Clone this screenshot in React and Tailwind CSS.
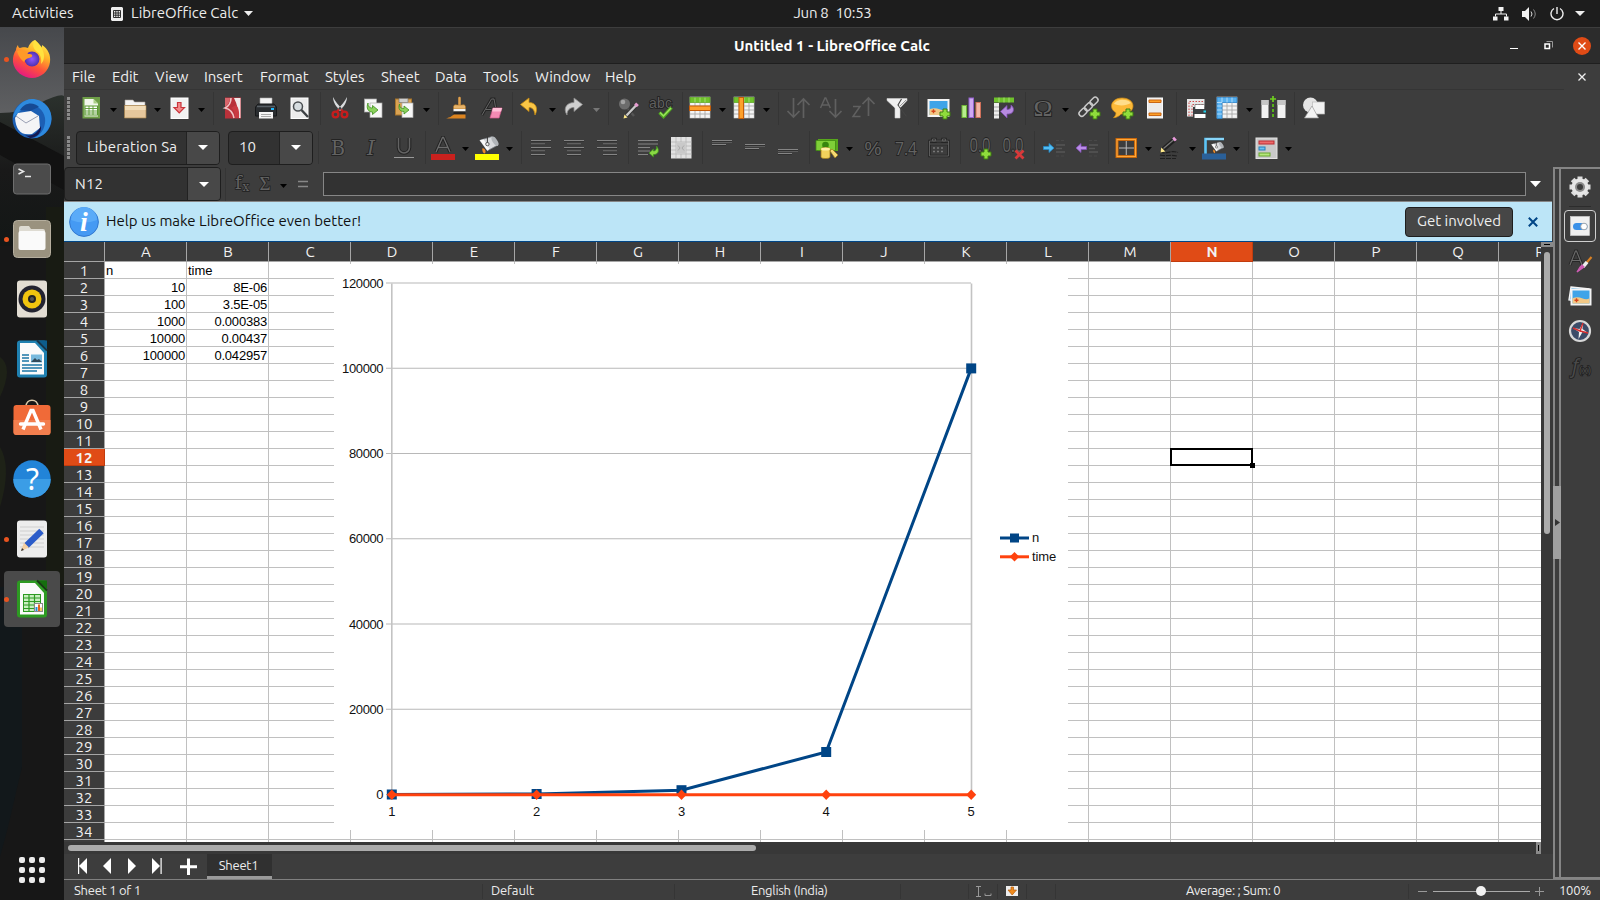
import React from 'react';

const Ic = ({ s = 24, children, className = '' }) => (
  <svg width={s} height={s} viewBox="0 0 24 24" fill="none" className={'shrink-0 overflow-visible ' + className}>{children}</svg>
);

const Caret = ({ className = 'text-black' }) => (
  <svg width="7" height="4" viewBox="0 0 7 4" className={'shrink-0 ' + className}><path d="M0 0h7L3.5 4z" fill="currentColor" /></svg>
);

const Btn = ({ children }) => <div className="flex h-6 w-[33px] shrink-0 items-center justify-center pr-[2px]">{children}</div>;
const Drop = ({ children, dim }) => (
  <div className="flex h-6 w-[44px] shrink-0 items-center gap-[7px] pl-[2px]">
    {children}
    <Caret className={dim ? 'mt-[3px] text-[#777]' : 'mt-[3px] text-black'} />
  </div>
);
const Sep = () => (
  <div className="flex h-[33px] w-2 shrink-0 justify-center"><div className="w-px bg-[#353535]" /></div>
);
const Grip = () => (
  <div className="flex w-3 shrink-0 flex-col gap-px">
    {[0, 1, 2, 3, 4, 5].map((i) => <div key={i} className="h-[3px] w-[3px] bg-[#8b8b8b]" />)}
  </div>
);

const Plus = ({ x, y }) => (
  <path transform={`translate(${x} ${y})`} d="M3 0h4v3h3v4H7v3H3V7H0V3h3z" fill="#8fdc3c" stroke="#3f7d12" strokeWidth="1" />
);

const Table = ({ x = 2, y = 1, w = 20, h = 21 }) => (
  <g>
    <rect x={x} y={y} width={w} height={h} fill="#f4f4f4" stroke="#d0d0d0" strokeWidth=".6" />
    <path d={`M${x + 5} ${y}v${h}M${x + 10} ${y}v${h}M${x + 15} ${y}v${h}M${x} ${y + 9}h${w}M${x} ${y + 13}h${w}M${x} ${y + 17}h${w}`} stroke="#a8a8a8" strokeWidth=".9" />
  </g>
);

const NewDoc = () => (
  <Ic>
    <rect x="3.500" y="1" width="17.500" height="21.500" fill="#6f9f48" />
    <path d="M5.500 3h9l4.500 4.500V20.500H5.500z" fill="#f2f7ec" />
    <path d="M14.500 3v4.500H19z" fill="#a9cf86" />
    <rect x="6" y="10" width="12.500" height="9" fill="#fff" stroke="#5a9a32" />
    <path d="M6 12.500h12.500M6 15h12.500M6 17h12.500M10 10v9M14 10v9" stroke="#5a9a32" strokeWidth=".9" />
  </Ic>
);
const Folder = () => (
  <Ic>
    <path d="M2 4h8l1.500 2H22v6H2z" fill="#f4f4f4" stroke="#a8a29a" strokeWidth=".6" />
    <path d="M2 9h20v2H2z" fill="#d6cfc4" />
    <path d="M1.500 9.500h21.500v12.500H1.500z" fill="#e6c79c" stroke="#a8844d" strokeWidth=".7" />
    <path d="M2 10h20.500v4H2z" fill="#f1dcb8" />
  </Ic>
);
const Save = () => (
  <Ic>
    <rect x="4" y="2" width="17" height="20.500" fill="#f2f2f2" stroke="#fff" />
    <path d="M10.500 6.500h3.500v5h3.500L12.250 17 7 11.500h3.500z" fill="#f58a8a" stroke="#c9353c" strokeWidth="1.200" />
  </Ic>
);
const Pdf = () => (
  <Ic>
    <rect x="4" y="1.500" width="16" height="21" fill="#b9313a" />
    <path d="M10 2c0 4-2 8-6 10 5 1 8 5 9 10" stroke="#f0c4c6" strokeWidth="1.600" />
    <path d="M4 2h5c0 4-2 7-5 9z" fill="#d9656b" />
    <path d="M13 2h6.500v20h-2c0-7-1-13-4.500-20z" fill="#f1e9e9" /><path d="M15 9c3 3 3.500 8 3 13h-4c0-5-1-8-4-10z" fill="#c93a42" />
  </Ic>
);
const Printer = () => (
  <Ic>
    <path d="M6 2h12v8H6z" fill="#f4f4f4" stroke="#aaa" strokeWidth=".6" />
    <path d="M4 8h16l2.500 3v9h-21v-9z" fill="#2a2d30" stroke="#17191b" />
    <path d="M3 10.500h18" stroke="#596066" strokeWidth="1.500" />
    <rect x="17" y="12" width="3" height="2" fill="#1fb9ff" />
    <path d="M5 16h14v6.500H5z" fill="#f6f6f6" />
    <path d="M7 18.500h10M7 20.500h10" stroke="#aaa" />
  </Ic>
);
const Preview = () => (
  <Ic>
    <rect x="4" y="2" width="17" height="20.500" fill="#ececec" stroke="#fff" />
    <circle cx="11" cy="10.500" r="4.500" fill="#d7dde0" stroke="#4b4f52" strokeWidth="1.500" />
    <path d="M14.500 14 21 21" stroke="#3d4144" strokeWidth="2.400" />
  </Ic>
);
const Cut = () => (
  <Ic>
    <path d="M5 1c0 5 3 10 8 14l1.500-2C11 10 7 5 5 1zM19 1c0 5-3 10-8 14l-1.500-2C13 10 17 5 19 1z" fill="#d9dcde" />
    <circle cx="7.500" cy="18.500" r="2.900" stroke="#c51d1d" strokeWidth="2.300" /><circle cx="16.500" cy="18.500" r="2.900" stroke="#c51d1d" strokeWidth="2.300" />
    <path d="m9 15.500 2-2M15 15.500l-2-2" stroke="#c51d1d" strokeWidth="2" />
  </Ic>
);
const Copy = () => (
  <Ic>
    <rect x="3.500" y="3" width="12" height="13" fill="#f7f7f7" stroke="#a9a9a9" strokeWidth=".7" />
    <rect x="9" y="7" width="12" height="14.500" fill="#f7f7f7" stroke="#a9a9a9" strokeWidth=".7" />
    <path d="M7 7c0 4 2 5 4.500 5V9.500l5.500 4.500-5.500 4.500V16C7 16 5 12 7 7z" fill="#8bd15c" stroke="#3f8f1e" strokeWidth=".8" />
  </Ic>
);
const Paste = () => (
  <Ic>
    <rect x="3.500" y="3" width="16" height="16" fill="#d9a253" stroke="#a8742b" />
    <path d="M7 2.500h9v4H7z" fill="#cfcfcf" stroke="#777" strokeWidth=".7" />
    <rect x="10" y="7" width="11" height="14.500" fill="#f7f7f7" stroke="#a9a9a9" strokeWidth=".7" />
    <path d="M7.500 8c0 4 2 4.500 4.500 4.500V10l5 4-5 4v-2.500c-4.500 0-6-3-4.500-7.500z" fill="#8bd15c" stroke="#3f8f1e" strokeWidth=".8" />
  </Ic>
);
const Brush = () => (
  <Ic>
    <path d="M13.500 2v8" stroke="#e2a04a" strokeWidth="2.500" strokeLinecap="round" />
    <path d="M7.500 10.500c1-3 4-1 6-1.500 2 .5 5-1.500 6 1.500v2.500h-12z" fill="#e7b369" stroke="#a96e21" strokeWidth=".6" />
    <path d="M7.500 13h12v2.500h-12z" fill="#f3f3f3" /><path d="M7.500 15.500h12v3h-12z" fill="#222" />
    <path d="M0 22c4 0 6-2.500 8-3.500h11.500v4H2z" fill="#dc8420" />
  </Ic>
);
const Clear = () => (
  <Ic>
    <path d="M3 19 12.500 3h2.500l1.500 8M6.500 13.500h6" stroke="#252525" strokeWidth="3" /><path d="M3 19 12.500 3h2.500l1.500 8M6.500 13.500h6" stroke="#666" strokeWidth="1" />
    <path d="M14 12h9l-3 10h-9z" fill="#f48bb4" stroke="#d65a8c" strokeWidth=".7" /><path d="M14 12h9l-1 3.500h-9z" fill="#ffc0d8" />
  </Ic>
);
const Undo = () => (
  <Ic>
    <path d="M2.500 8.500 11 2v4.500c7 0 9.500 6 6 12.500C16.500 14 14.500 11.500 11 11.500V15.500z" fill="#fac646" stroke="#c58a12" strokeWidth=".8" />
  </Ic>
);
const Redo = () => (
  <Ic>
    <path d="M20.500 8.500 12 2v4.500C5 6.500.5 12 5 19c0-5 3-7.500 7-7.500V15.500z" fill="#cfcfcf" stroke="#8a8a8a" strokeWidth=".8" />
  </Ic>
);
const Find = () => (
  <Ic>
    <path d="m12 13 6 7" stroke="#555" strokeWidth="2.500" /><circle cx="8.500" cy="8" r="5.500" fill="#6c6c6c" /><circle cx="7" cy="6" r="2.300" fill="#a2a2a2" />
    <path d="m10.500 19.500 9.500-10" stroke="#333" strokeWidth="4.200" /><path d="m10.500 19.500 9.500-10" stroke="#c9c9c9" strokeWidth="2.400" /><path d="m19.500 10 2-2.300" stroke="#e69bd0" strokeWidth="3.600" /><path d="m7.500 22.500 1-4 3 3z" fill="#ffe98a" />
  </Ic>
);
const Spell = () => (
  <Ic>
    <text x="0" y="12" fontFamily="Liberation Sans, sans-serif" fontSize="14" fill="#606060" stroke="#1c1c1c" strokeWidth="1.600" paintOrder="stroke" textLength="23">abc</text>
    <path d="m10.500 16.500 4 4 8-9" stroke="#4fa520" strokeWidth="3.400" /><path d="m11 16.500 3.500 3.500 7.500-8" stroke="#9be35c" strokeWidth="1.500" />
  </Ic>
);
const Rows = () => (
  <Ic><Table /><rect x="2" y="1.500" width="20" height="5" fill="#6fc22c" stroke="#57a31c" strokeWidth=".7" /><path d="M7 1.500v5M12 1.500v5M17 1.500v5" stroke="#b3e585" strokeWidth=".8" />
    <rect x="1.500" y="10" width="21" height="4.500" fill="#fda02b" stroke="#c55d09" /></Ic>
);
const Cols = () => (
  <Ic><Table /><rect x="2" y="1.500" width="20" height="5" fill="#6fc22c" stroke="#57a31c" strokeWidth=".7" /><path d="M12 1.500v5M17 1.500v5" stroke="#b3e585" strokeWidth=".8" />
    <rect x="7" y="1.500" width="4.500" height="21" fill="#fda02b" stroke="#c55d09" /></Ic>
);
const Sort = ({ kind }) => (
  <Ic>
    {kind === 'both' && <path d="M7.500 2v19M1.500 15l6 6 6-6M17.500 22V3M11.500 9l6-6 6 6" stroke="#606060" strokeWidth="1.700" />}
    {kind === 'az' && <><path d="M1.500 12 6 2h.800l4.500 10M3 9h7" stroke="#606060" strokeWidth="1.500" /><path d="M16.500 3v18M10.500 15l6 6 6-6" stroke="#606060" strokeWidth="1.700" /></>}
    {kind === 'za' && <><path d="M1 10.500h7L1 20.500h7.500" stroke="#606060" strokeWidth="1.500" /><path d="M16.500 20V2M10.500 8l6-6 6 6" stroke="#606060" strokeWidth="1.700" /></>}
  </Ic>
);
const Filter = () => (
  <Ic><path d="M2 2.500h20v2l-7 7.500v10h-5V12L2 4.500z" fill="#efefef" stroke="#cfcfcf" strokeWidth=".6" /><path d="m16.500 3-3.500 6 8.500 11.500" stroke="#444" strokeWidth="1.100" /><path d="m14 11 7-7" stroke="#999" /></Ic>
);
const Sky = ({ x, y, w, h }) => (
  <g><rect x={x} y={y} width={w} height={h} fill="#3fa4e8" stroke="#f4f4f4" strokeWidth="2" />
    <path d={`M${x + 1} ${y + h * 0.58}q${w / 4}-2 ${w / 2} 0t${w / 2 - 2} 0v${h * 0.36}h-${w - 2}z`} fill="#f1c886" />
    <path d={`M${x + 5} ${y + h * 0.58}v4m-2-2h4`} stroke="#d5451b" strokeWidth="1.400" /></g>
);
const Image = () => <Ic><Sky x={2.5} y={4} w={20} h={16} /><Plus x={14} y={13} /></Ic>;
const Chart = () => (
  <Ic><rect x="3" y="9.500" width="4.500" height="12" fill="#b8ec8d" stroke="#6fb737" /><rect x="10" y="2" width="4.500" height="19.500" fill="#cfaaf2" stroke="#9461cf" /><rect x="17" y="6.500" width="4.500" height="15" fill="#f2b6a6" stroke="#d0705a" /></Ic>
);
const Pivot = () => (
  <Ic><path d="M2 1.500h20v5H2z" fill="#6fc22c" /><path d="M7 1.500v5M12 1.500v5M17 1.500v5" stroke="#b3e585" strokeWidth=".8" /><path d="M2 7h5v15.500H2z" fill="#eee" /><path d="M2 11h5M2 15h5M2 19h5" stroke="#999" strokeWidth=".9" />
    <path d="m8.500 15.500 6.500-6v4c3 0 4.500-1.500 4-4.500 5 4 2 10-4 9v4z" fill="#b78be0" stroke="#7d4bb0" strokeWidth=".8" /></Ic>
);
const Glyph = ({ t, size = 20, font = 'Liberation Serif, serif', w, children, italic, y = 19, fill = '#636363' }) => (
  <Ic><text x="12" y={y} textAnchor="middle" fontFamily={font} fontSize={size} fill={fill} stroke="#232323" strokeWidth="1.800" paintOrder="stroke" fontStyle={italic ? 'italic' : 'normal'} textLength={w} lengthAdjust="spacingAndGlyphs">{t}</text>{children}</Ic>
);
const Link = () => (
  <Ic><g stroke="#c9c9c9" strokeWidth="1.500"><rect x="12.500" y="2.500" width="9" height="5.500" rx="2.700" transform="rotate(-45 17 5.250)" /><rect x="7" y="8" width="9" height="5.500" rx="2.700" transform="rotate(-45 11.500 10.700)" /><rect x="1.500" y="13.500" width="9" height="5.500" rx="2.700" transform="rotate(-45 6 16.200)" /></g><Plus x={13} y={13} /></Ic>
);
const Comment = () => (
  <Ic><path d="M12 2C6 2 1.500 5.500 1.500 10c0 3 2 5.500 4.500 6.700 0 2-1 3.500-2.500 5 3 0 6-1.700 7.500-3.700C18 18.300 23 15 23 10S18 2 12 2z" fill="#fcb938" stroke="#cf8d15" strokeWidth=".7" /><path d="M4 8c2-5 13-6 17-1-5 3-12 3-17 1z" fill="#ffdd8a" /><Plus x={13} y={13} /></Ic>
);
const Headers = () => (
  <Ic><rect x="4.500" y="2" width="15" height="20" fill="#ececec" stroke="#fafafa" /><path d="M6 4h12v2.500H6zM6 17h12v2.500H6z" fill="#fda02b" stroke="#c55d09" strokeWidth=".9" /></Ic>
);
const PrintArea = () => (
  <Ic><path d="M3 3h17.500v8H9v9.500H3z" fill="#e6e6e6" /><path d="M5 20V5.500h15M8 20V8.500h11" stroke="#d04a4a" strokeWidth="1" strokeDasharray="1.500 1.500" /><path d="M11 8.500h9.500v5H11z" fill="#fff" stroke="#555" strokeWidth=".6" /><path d="M9 13h13v6.500H9z" fill="#3c4144" /><path d="M10.500 18h11v4h-11z" fill="#fff" /><path d="M19.500 14.500H22v2h-2.500z" fill="#1fd0e8" /></Ic>
);
const Freeze = () => (
  <Ic><Table /><path d="M2 1.500h20v5H7v16H2z" fill="#58b1f0" stroke="#2a81c8" strokeWidth=".8" /><path d="M7 1.500v5M12 1.500v5M17 1.500v5M2 6.500h5M2 10h5M2 14h5M2 18h5" stroke="#c5e6fd" strokeWidth=".8" /></Ic>
);
const Split = () => (
  <Ic><path d="M.5 4h7v18h-7zM16.500 4h8v18h-8z" fill="#f2f2f2" /><path d="M.5 4h7v5h-7zM16.500 4h8v5h-8z" fill="#c6c6c6" /><path d="M12 8v15" stroke="#56b019" strokeWidth="2" strokeDasharray="3 2" /><path d="M12 0v6M9 3h6" stroke="#6fd01f" strokeWidth="1.700" /></Ic>
);
const Shapes = () => (
  <Ic><circle cx="8.500" cy="9" r="7.500" fill="#e4e4e4" /><rect x="10.500" y="6" width="12" height="12" fill="#f2f2f2" stroke="#bbb" strokeWidth=".7" /><path d="m10 10 6.500 12h-14z" fill="#f4f4f4" stroke="#999" strokeWidth=".7" /></Ic>
);
const AlignI = ({ k }) => {
  const w = [20, 14, 20, 14, 14];
  return <Ic>{w.map((n, i) => {
    const x = k === 'l' ? 2 : k === 'c' ? 12 - n / 2 : 22 - n;
    return <g key={i}><rect x={x} y={4 + i * 3.5} width={n} height="1" fill="#858585" /><rect x={x} y={5 + i * 3.5} width={n} height=".6" fill="#2b2b2b" /></g>;
  })}</Ic>;
};
const VAlign = ({ y }) => (
  <Ic><path d={`M2 ${y}h20M2 ${y + 4}h14`} stroke="#858585" /><path d={`M2 ${y + 2}h20`} stroke="#5c5c5c" /><path d={`M2 ${y + 1}h20M2 ${y + 5}h14`} stroke="#292929" strokeWidth=".6" /></Ic>
);
const Wrap = () => (
  <Ic><path d="M2 4.500h20M2 8h20M2 11.500h12M2 15h12M2 18.500h10" stroke="#858585" /><path d="m13 17 4.500-4V15c2 0 3.500-2 3-5 4 5 1 9-3 8.500V21z" fill="#8ad944" stroke="#3f8f1e" strokeWidth=".8" /></Ic>
);
const Merge = () => (
  <Ic><rect x="2" y="1" width="20.500" height="21.500" fill="#e1e1e1" /><path d="M2 6h20.500M2 18h20.500M7 1v21M12 1v5M12 18v4M17 1v21M2 10h5M2 14h5M17 10h5M17 14h5" stroke="#b4b4b4" strokeWidth=".8" /><path d="M7.500 6.500h9v11h-9z" fill="#c9c9c9" /><path d="m9 9.500 2 2.500-2 2.500M15 9.500 13 12l2 2.500" stroke="#aaa" /></Ic>
);
const FontColor = () => (
  <Ic><path d="M5 16 11.500 1.500h1L19 16M7.500 11.500h9" stroke="#232323" strokeWidth="3.200" /><path d="M5 16 11.500 1.500h1L19 16M7.500 11.500h9" stroke="#6c6c6c" strokeWidth="1.300" /><rect x="0" y="18" width="24" height="6" fill="#c9211e" /></Ic>
);
const Bucket = ({ x = 0, y = 0, k = 1 }) => (
  <g transform={`translate(${x} ${y}) scale(${k})`}><path d="m4 4 13-4 6 9-11 6z" fill="#d8dadd" stroke="#7f8489" strokeWidth=".8" /><path d="m4 4 4-1 6 10-2 2z" fill="#f9f9f9" /><ellipse cx="20" cy="5" rx="2.500" ry="5.500" transform="rotate(-33 20 5)" fill="#b0b4b8" /><path d="M12 7V0" stroke="#333" /><circle cx="12" cy="8" r="1.800" fill="#eee" stroke="#333" strokeWidth=".8" /><path d="M7 12c3 1 4 4 2 6-2-1-3-4-2-6z" fill="#ee8a28" /></g>
);
const Fill = () => <Ic><Bucket x={1} y={0.5} k={0.95} /><rect x="0" y="18" width="24" height="6" fill="#ffff00" /></Ic>;
const Money = () => (
  <Ic><path d="M3 3h20v12H3z" fill="#58a81c" /><path d="M1 4.500h19.500v10H1z" fill="#7fcf38" stroke="#3f8a12" strokeWidth=".8" /><circle cx="10.500" cy="9" r="3.300" fill="#35850e" /><path d="M6 13c0-2 9-2 9 0v8c0 2-9 2-9 0z" fill="#f2d25c" stroke="#a17c1a" strokeWidth=".8" /><ellipse cx="10.500" cy="13" rx="4.500" ry="1.500" fill="#fdf0a5" /><path d="m15 15 2-2 6 6-3 3z" fill="#f6db74" stroke="#a17c1a" strokeWidth=".7" /></Ic>
);
const Cal = () => (
  <Ic><path d="M2.500 5h19v15h-19zM5.500 3h3v3h-3zM15.500 3h3v3h-3zM3 8h18" stroke="#232323" strokeWidth="2.400" /><path d="M2.500 5h19v15h-19zM5.500 3h3v2h-3zM15.500 3h3v2h-3zM3 8h18" stroke="#636363" strokeWidth=".9" /><path d="M6 12h12M6 15.500h12" stroke="#777" strokeWidth="1.500" strokeDasharray="2 2" /></Ic>
);
const Dec = ({ add }) => (
  <Glyph t="0.0" size={20} font="Open Sans, sans-serif" w={21} y={16}>
    {add ? <Plus x={13} y={13} /> : <path d="m14.500 14.500 8 8M22.500 14.500l-8 8" stroke="#d9393a" strokeWidth="2.800" />}
  </Glyph>
);
const Indent = ({ left }) => (
  <Ic>{left
    ? <path d="m1 12 5-4.500V10.500h5.500v3H6v3z" fill="#bb8de8" stroke="#8450bb" strokeWidth=".8" />
    : <path d="m12 12-5-4.500V10.500H1.500v3H7v3z" fill="#52bdf2" stroke="#2389c9" strokeWidth=".8" />}
  <path d="M14 9h9M14 12.500h6M14 16h9" stroke="#565656" strokeWidth="1.300" /><path d="M14 4.500h8M14 20h8" stroke="#484848" strokeDasharray="3 2" /></Ic>
);
const Borders = () => (
  <Ic><rect x="3" y="3.500" width="18.500" height="17" stroke="#c46208" strokeWidth="3" /><rect x="3" y="3.500" width="18.500" height="17" stroke="#ffa839" strokeWidth="1.200" /><path d="M12.250 5v14M5 12h15" stroke="#bdbdbd" /></Ic>
);
const Pen = () => (
  <Ic><path d="M2 15.500c5 4 10-2 18 1M2 19c6 2 10-1 17 1M2 22.500h16" stroke="#1f1f1f" strokeWidth="1.200" strokeDasharray="5 1" /><path d="M5 13.500 16.500 3.500" stroke="#202020" strokeWidth="4.600" /><path d="M5.500 12.500 16 3.500" stroke="#777" strokeWidth="1.200" /><path d="m15.500 4 2-1.800" stroke="#ea9bdc" strokeWidth="4" /><path d="m2.500 16.500.8-5 4 4z" fill="#ffe98a" /></Ic>
);
const BgStyle = () => (
  <Ic><path d="M3.500 18V3H22" stroke="#5bc4f5" strokeWidth="2.600" /><path d="M3.500 3H22" stroke="#b5e8ff" /><Bucket x={7} y={6} k={0.62} /><rect x="0" y="17.500" width="24" height="6" fill="#2a6099" /></Ic>
);
const Cond = () => (
  <Ic><rect x="2" y="2" width="21" height="20.500" fill="#c9c9c9" stroke="#e4e4e4" /><rect x="5" y="5" width="15" height="3" fill="#ee6a6a" stroke="#b92d33" /><rect x="5" y="11" width="6" height="3" fill="#6cc0f2" stroke="#2380bb" /><rect x="5" y="17" width="11" height="3" fill="#b5e77c" stroke="#69a82d" /></Ic>
);

const menus = [['File', 'w-[40px]'], ['Edit', 'w-[43px]'], ['View', 'w-[49px]'], ['Insert', 'w-[56px]'], ['Format', 'w-[65px]'], ['Styles', 'w-[56px]'], ['Sheet', 'w-[54px]'], ['Data', 'w-[48px]'], ['Tools', 'w-[52px]'], ['Window', 'w-[70px]'], ['Help', 'w-[40px]']];

const TopBar = () => (
  <div className="flex h-[27px] shrink-0 items-center bg-[#1d1d1d] text-[15px] text-[#ececec]">
    <div className="w-[99px] pl-3">Activities</div>
    <div className="flex w-[641px] items-center pl-3">
      <svg width="12" height="14" viewBox="0 0 12 14"><path d="M1 0h10l1 1v12l-1 1H1l-1-1V1z" fill="#eee" /><path d="M2.500 3.500h7v7h-7zM2.500 6h7M2.500 8.200h7M4.800 3.500v7M7.200 3.500v7" stroke="#1d1d1d" strokeWidth=".9" fill="none" /></svg>
      <span className="pl-2">LibreOffice Calc</span>
      <svg width="9" height="5" viewBox="0 0 9 5" className="ml-[6px]"><path d="M0 0h9L4.500 5z" fill="#eee" /></svg>
    </div>
    <div className="flex w-[184px] justify-center gap-[7px] pl-px tracking-[-0.3px]"><span>Jun 8</span><span>10:53</span></div>
    <div className="flex flex-1 items-center justify-end pr-[15px]">
      <svg width="16" height="14" viewBox="0 0 16 14"><path d="M5.500 0h5v4h-5zM0 9.500h4.500v4H0zM11 9.500h4.500v4H11z" fill="#f2f2f2" /><path d="M8 4v3M2.500 9.500V7h11v2.500" stroke="#f2f2f2" fill="none" /></svg>
      <svg width="16" height="14" viewBox="0 0 16 14" className="ml-[13px]"><path d="M0 4h3l4-4v14l-4-4H0z" fill="#f2f2f2" /><path d="M9 4.500q2 2.500 0 5" stroke="#ddd" fill="none" /><path d="M11.500 2.500q3.500 4.500 0 9" stroke="#888" fill="none" /></svg>
      <svg width="14" height="14" viewBox="0 0 14 14" className="ml-[12px]"><path d="M4 1.500a6 6 0 1 0 6 0M7 0v7" stroke="#eee" strokeWidth="1.400" fill="none" /></svg>
      <svg width="10" height="5" viewBox="0 0 10 5" className="ml-[11px]"><path d="M0 0h10L5 5z" fill="#eee" /></svg>
    </div>
  </div>
);

const DockItem = ({ dot, active, children }) => (
  <div className="relative flex h-[60px] shrink-0 items-center justify-center">
    {active && <div className="absolute top-[2px] left-1 h-14 w-14 rounded bg-[#4a4a4a]" />}
    {dot && <div className="absolute top-[28px] left-1 h-[5px] w-[5px] rounded-full bg-[#e95420]" />}
    <svg width="40" height="40" viewBox="0 0 40 40" fill="none" className="relative overflow-visible">{children}</svg>
  </div>
);

const Dock = () => (
  <div className="relative flex w-16 shrink-0 flex-col overflow-hidden bg-[#171717] pt-[2px]">
    <svg className="absolute top-0 left-0" width="64" height="873" viewBox="0 0 64 873">
      <defs>
        <linearGradient id="dsky" x1="0" y1="0" x2="0" y2="1"><stop offset="0" stopColor="#46484c" /><stop offset="1" stopColor="#606163" /></linearGradient>
        <linearGradient id="dhill" x1="0" y1="0" x2="0" y2="1"><stop offset="0" stopColor="#2b312d" /><stop offset=".5" stopColor="#191919" /><stop offset="1" stopColor="#131716" /></linearGradient>
      </defs>
      <path d="M0 0h64v90H0z" fill="url(#dsky)" /><path d="M0 86q20 0 40-10t24-7v150H0z" fill="url(#dhill)" />
      <path d="M0 95l64 34v34L0 128z" fill="#121212" />
      <path d="M0 560h22v180L8 800 0 830z" fill="#12181b" /><path d="M46 180h18v380H46z" fill="#181b13" />
      <path d="M0 420q12 20 0 60zM0 330q14 10 0 40z" fill="#1e2217" />
    </svg>
    <DockItem dot>
      <defs>
        <linearGradient id="ff" x1=".8" y1="0" x2=".3" y2="1"><stop offset="0" stopColor="#fff44f" /><stop offset=".35" stopColor="#ffb228" /><stop offset=".65" stopColor="#ff5338" /><stop offset="1" stopColor="#e31587" /></linearGradient>
        <radialGradient id="fp"><stop offset="0" stopColor="#9059ff" /><stop offset="1" stopColor="#4f31b0" /></radialGradient>
      </defs>
      <path d="M23 1c3 3 5 5 6 8 1-1 1-2 1-3 6 4 9 10 8 17-1 9-9 16-18 16S2 32 1 23c-.5-5 1-9 3-12 0-2 1-4 2-5 0 2 1 3 2 3 2-1 6-1 8 0 1-4 4-7 7-8z" fill="url(#ff)" />
      <circle cx="20" cy="20" r="7.500" fill="url(#fp)" /><path d="M5 12c6-2 10 1 11 3 3 0 5 .5 4 2.500-2 2-6 1-8 5.500-2-2-5-4-7-11z" fill="#ff9a28" />
      <path d="M23 1c3 3 7 6 8 11 2 5 1 10-2 13 1-6-1-11-5-13-3-3-4-7-1-11z" fill="#ffe23f" />
    </DockItem>
    <DockItem>
      <circle cx="20" cy="20" r="19.500" fill="#1c5fb4" /><path d="M1 19C2 8 12 0 20 0c11 0 20 9 19.500 20C39 31 30 39 22 39c9-4 12-13 11-20C31 8 20 3 12 8z" fill="#2e8ade" /><path d="M8 11C13 3 22 3 27 8l-9 4z" fill="#164a94" />
      <path d="m3 19 3-5 13-2 8 5 1 12-8 6C8 37 4 30 3 19z" fill="#f4f4f6" /><path d="m4 17 10 7 12-7" stroke="#9aa0b4" /><path d="M13 36c8 2 12-2 16-9 1 7-5 12-11 12z" fill="#151a52" />
    </DockItem>
    <DockItem>
      <rect x="1.500" y="5" width="37" height="30" rx="3" fill="#4b4b4b" stroke="#6e6e6e" /><path d="m6.500 10 5 2.500-5 2.500M13 17.500h6" stroke="#e8e8e8" strokeWidth="1.500" />
    </DockItem>
    <DockItem dot>
      <rect x="1.500" y="1.500" width="37" height="37" rx="4" fill="#9a927f" stroke="#b5ae9e" /><path d="M7 9q0-2 2-2h8l2 3h12q2 0 2 2v18H7z" fill="#dedbd2" /><rect x="6.500" y="12" width="27" height="19" rx="2" fill="#fafafa" />
    </DockItem>
    <DockItem>
      <rect x="5" y="1.500" width="30" height="37" rx="3" fill="#e2ddd3" /><circle cx="20" cy="20" r="13.500" fill="#232330" /><circle cx="20" cy="20" r="9.500" fill="#f1c40f" /><circle cx="20" cy="20" r="4" fill="#222" /><circle cx="20" cy="20" r="2" fill="#555" />
    </DockItem>
    <DockItem>
      <rect x="5" y="1.500" width="30" height="37" rx="3" fill="#1f80b0" /><path d="M26 1.500 35 10V1.500z" fill="#0d5d8c" /><path d="M8 4h15l9 10v21.500H8z" fill="#fafafa" /><path d="m25 1.500 10 10" stroke="#173448" strokeWidth="2" />
      <path d="M10 16h7M10 19h7M10 22h7M10 26h20M10 29h20M10 32h15" stroke="#1b75a5" strokeWidth="1.600" /><rect x="19" y="15.500" width="11" height="8" fill="#77b9dd" /><path d="m19 23 4-4 2 2 2-1 3 3z" fill="#30495a" />
    </DockItem>
    <DockItem>
      <path d="M14 8c0-9 12-9 12 0" stroke="#dbc9a9" strokeWidth="1.600" /><rect x="1.500" y="6" width="37" height="30" rx="3" fill="#f06a38" /><path d="M1.500 21h37v12q0 3-3 3h-31q-3 0-3-3z" fill="#f27e4e" />
      <path d="m11 30.500 8-19h2l8 19" stroke="#fff" strokeWidth="3.400" /><path d="M8.500 25h23" stroke="#fff" strokeWidth="3.400" strokeLinecap="round" />
    </DockItem>
    <DockItem>
      <circle cx="20" cy="20" r="18.700" fill="#2284d8" /><path d="M1.300 20h37.400a18.700 18.700 0 0 1-37.400 0z" fill="#3b9de6" /><text x="20.500" y="31" textAnchor="middle" fontFamily="Noto Sans, sans-serif" fontSize="30" fill="#fff">?</text>
    </DockItem>
    <DockItem dot>
      <rect x="5" y="1.500" width="30" height="37" rx="3" fill="#ededed" /><path d="M8 8h24M8 12h24M8 16h24M8 20h24M8 24h24M8 28h24" stroke="#cfcfcf" /><path d="M14 27 29.500 12" stroke="#2b5cc9" strokeWidth="6.400" /><path d="m9 32 3-8.500 5 5z" fill="#f3cfa2" /><path d="m9 32 1-3 2 2z" fill="#333" />
    </DockItem>
    <DockItem dot active>
      <rect x="5" y="1.500" width="30" height="37" rx="3" fill="#2d9a22" /><path d="M26 1.500 35 10V1.500z" fill="#156e0e" /><path d="M8 4h15l9 10v21.500H8z" fill="#fafafa" /><path d="m25 1.500 10 10" stroke="#173a14" strokeWidth="2" />
      <rect x="11.500" y="15.500" width="17" height="17" fill="#c9efc0" stroke="#2d9a22" /><path d="M11.500 19h17M11.500 22.500h17M11.500 26h17M11.500 29.500h17M17 15.500v17M22.500 15.500v17" stroke="#2d9a22" strokeWidth="1.200" /><rect x="22.500" y="24.500" width="8" height="8" fill="#fff" stroke="#888" /><path d="M24.500 28v4" stroke="#268bd2" strokeWidth="2" /><path d="M27 25.500v6.500" stroke="#e2661a" strokeWidth="2" /><path d="M29 28.500v3.500" stroke="#f2b632" strokeWidth="1.500" />
    </DockItem>
    <div className="relative mt-auto mb-[17px] grid grid-cols-3 gap-1 self-center">
      {[...Array(9)].map((_, i) => <div key={i} className="h-[6px] w-[6px] rounded-[2px] bg-[#ececec]" />)}
    </div>
  </div>
);

const Combo = ({ text, box, h, track = '' }) => (
  <div className={'flex shrink-0 overflow-hidden rounded border border-[#1e1e1e] bg-[#323232] text-[15px] text-[#eee] ' + box + ' ' + h}>
    <div className={'flex flex-1 items-center border-r border-[#222] pl-[10px] whitespace-nowrap ' + track}>{text}</div>
    <div className="flex w-8 items-center justify-center bg-[#484848]">
      <svg width="10" height="5" viewBox="0 0 10 5"><path d="M0 0h10L5 5z" fill="#fff" /></svg>
    </div>
  </div>
);

const cols = 'ABCDEFGHIJKLMNOPQR'.split('');
const data = { A1: 'n', B1: 'time', A2: '10', B2: '8E-06', A3: '100', B3: '3.5E-05', A4: '1000', B4: '0.000383', A5: '10000', B5: '0.00437', A6: '100000', B6: '0.042957' };

const xs = [57.8, 202.6, 347.5, 492.2, 637.2];
const ys = [530.5, 530, 526.2, 488, 104.4];

const ChartObject = () => (
  <svg className="absolute top-[22px] left-[270px] bg-white" width="734" height="566" viewBox="0 0 734 566" fontFamily="Liberation Sans, Arial, sans-serif" fontSize="13" fill="#111">
    {[0, 1, 2, 3, 4, 5, 6].map((i) => (
      <g key={i}>
        <path d={`M52 ${530.5 - i * 85.25}H637`} stroke="#b8b8b8" strokeWidth="1.200" />
        <text x="49.200" y={535 - i * 85.25} textAnchor="end" letterSpacing="-0.38">{i * 20000}</text>
      </g>
    ))}
    <path d="M57.800 19.500V534M637.500 19.500V531" stroke="#c3c3c3" strokeWidth="1.600" />
    <polyline points={xs.map((x, i) => `${x},${ys[i]}`).join(' ')} fill="none" stroke="#004586" strokeWidth="3" />
    {xs.map((x, i) => <rect key={i} x={x - 5} y={ys[i] - 5} width="10" height="10" fill="#004586" />)}
    <path d="M57.800 530.700H637.200" stroke="#ff420e" strokeWidth="3" />
    {xs.map((x, i) => (
      <g key={i}>
        <path d={`M${x} 525.500l5 5.200-5 5.200-5-5.200z`} fill="#ff420e" />
        <text x={x} y="552" textAnchor="middle">{i + 1}</text>
      </g>
    ))}
    <path d="M666 274h29" stroke="#004586" strokeWidth="3" /><rect x="676" y="269.500" width="9" height="9" fill="#004586" />
    <path d="M666 292.800h29" stroke="#ff420e" strokeWidth="3" /><path d="m680.500 288 4.800 4.800-4.800 4.800-4.800-4.800z" fill="#ff420e" />
    <text x="698" y="278">n</text><text x="698" y="297" letterSpacing="-0.1">time</text>
  </svg>
);

const Grid = () => (
  <div className="relative h-[600px] w-[1477px] overflow-hidden bg-white">
    <div className="flex h-5 w-[1600px] bg-[#3c3c3c] text-[15px] text-[#f2f2f2]">
      <div className="w-[41px] shrink-0 border-r border-b border-[#a6a6a6]" />
      {cols.map((c) => (
        <div key={c} className={'flex w-[82px] shrink-0 items-center justify-center border-r border-b pl-px leading-none ' + (c === 'N' ? 'border-[#c23c0e] bg-[#e04b16] font-bold' : 'border-[#a6a6a6]')}>{c}</div>
      ))}
    </div>
    {[...Array(35)].map((_, i) => (
      <div key={i} className="flex h-[17px] w-[1600px]">
        <div className={'flex w-[41px] shrink-0 items-center justify-center border-r border-b text-[15px] leading-none text-[#f2f2f2] ' + (i === 11 ? 'border-[#c23c0e] bg-[#e04b16] font-bold' : 'border-[#a6a6a6] bg-[#3c3c3c]')}>{i < 34 ? i + 1 : ''}</div>
        {cols.map((c) => (
          <div key={c} className={"w-[82px] shrink-0 border-r border-b border-[#c0c0c0] px-px font-['Liberation_Sans',Arial,sans-serif] text-[13px] leading-[17px] text-black " + (i === 0 ? 'text-left' : 'text-right tracking-[-0.2px]')}>{data[c + (i + 1)] || ''}</div>
        ))}
      </div>
    ))}
    <ChartObject />
    <div className="absolute top-[206px] left-[1106px] h-[18px] w-[83px] border-2 border-black" />
    <div className="absolute top-[221px] left-[1186px] h-[5px] w-[5px] bg-black" />
  </div>
);

const Sheet = () => (
  <div className="flex h-[600px] shrink-0">
    <Grid />
    <div className="flex w-3 flex-col items-center bg-[#383838]">
      <div className="flex h-[5px] w-3 items-center justify-center bg-[#8a8a8a]"><div className="h-px w-[6px] bg-black" /></div>
      <div className="mt-[5px] h-[282px] w-[6px] rounded-full bg-[#ababab]" />
    </div>
  </div>
);

const Tabs = () => (
  <div className="flex h-[25px] shrink-0 items-center">
    <svg width="128" height="18" viewBox="0 0 128 18" fill="#fff" className="ml-2 shrink-0">
      <path d="M6 0h1.200v16H6zM15 0v16L7 8zM39 0v16L31 8zM56 0v16l8-8zM80 0v16l8-8zM88.500 0h1.200v16h-1.200z" />
      <path d="M108 7.200h7V.500h3v6.700h7v3h-7v6.700h-3v-6.700h-7z" />
    </svg>
    <div className="ml-[7px] flex h-[25px] w-[65px] items-start justify-center border-b-[3px] border-[#9a9a9a] bg-[#303030] pt-[2px] pr-[2px] text-[13px] tracking-[-0.25px] text-[#eee]">Sheet1</div>
  </div>
);

const Div = ({ className = '' }) => <div className={'h-[15px] w-px bg-[#353535] ' + className} />;

const Status = () => (
  <div className="flex h-[21px] shrink-0 items-center border-t border-[#808080] pt-[2px] text-[13px] whitespace-nowrap text-[#ececec]">
    <div className="w-[418px] pl-[10px] tracking-[-0.25px]">Sheet 1 of 1</div>
    <Div />
    <div className="w-[191px] pl-2 tracking-[-0.15px]">Default</div>
    <Div />
    <div className="w-[225px] pl-[76px] tracking-[-0.3px]">English (India)</div>
    <Div />
    <div className="w-[67px]" />
    <Div />
    <div className="flex w-7 items-center pl-[7px]"><svg width="16" height="11" viewBox="0 0 16 11" fill="none" stroke="#999"><path d="M0 .5h5M2.500.500v10M0 10.500h5M9 7.500v2h6v-2" /></svg></div>
    <Div />
    <div className="flex w-7 items-center justify-center pb-px"><svg width="12" height="10" viewBox="0 0 12 10"><path d="M0 0h12v10H0z" fill="#eee" /><path d="M5 1h2.500v3h3L6.200 9 2 4h3z" fill="#f08b1d" stroke="#b65b08" strokeWidth=".7" /></svg></div>
    <Div />
    <div className="w-7" />
    <Div />
    <div className="w-[352px] pl-[130px] tracking-[-0.3px]">Average: ; Sum: 0</div>
    <Div />
    <div className="flex flex-1 items-center pl-[9px]">
      <div className="h-px w-[9px] bg-[#999]" />
      <div className="relative ml-[6px] flex h-3 w-[97px] items-center"><div className="h-px w-full bg-[#aaa]" /><div className="absolute left-[43px] h-[10px] w-[10px] rounded-full bg-[#f2f2f2]" /></div>
      <svg width="9" height="9" viewBox="0 0 9 9" className="ml-[5px]"><path d="M4.500 0v9M0 4.500h9" stroke="#999" /></svg>
      <span className="ml-[15px] tracking-[-0.25px]">100%</span>
    </div>
  </div>
);

const Side = () => (
  <div className="flex w-[47px] shrink-0 border-t-2 border-b-2 border-[#858585]">
    <div className="flex w-2 flex-col justify-center border-r-2 border-l-2 border-[#858585] bg-[#3d3d3d] pb-[2px]">
      <div className="-mx-[2px] flex h-[73px] items-center justify-center bg-[#a0a0a0]"><svg width="5" height="7" viewBox="0 0 5 7"><path d="M0 0v7l5-3.500z" fill="#333" /></svg></div>
    </div>
    <div className="flex flex-1 flex-col items-center pr-[2px]">
      <div className="flex h-[37px] w-full items-center justify-center pb-[2px]"><Ic>
        <g stroke="#dedede" strokeWidth="5"><path d="M12 1.500v21M1.500 12h21M4.600 4.600l14.800 14.800M19.400 4.600 4.600 19.400" /></g><circle cx="12" cy="12" r="8.500" fill="#e6e6e6" /><circle cx="12" cy="12" r="5" fill="#8b8b8b" /><circle cx="12" cy="12" r="3" fill="#3d3d3d" /></Ic></div>
      <div className="h-px w-[22px] bg-[#2c2c2c]" />
      <div className="mt-[3px] flex h-8 w-8 items-center justify-center rounded border border-[#cfcfcf]"><Ic>
        <rect x="2.500" y="2.500" width="19" height="19" fill="#f0f0f0" stroke="#ccc" strokeWidth=".7" /><rect x="5" y="9" width="14.500" height="7" rx="3.500" fill="#3b91e8" /><circle cx="16" cy="12.500" r="3.300" fill="#fff" stroke="#999" strokeWidth=".8" /></Ic></div>
      <div className="mt-px flex h-[35px] items-center"><Ic><path d="M2 16 7.500 2h1L14 16M4 11.500h8" stroke="#262626" strokeWidth="3" /><path d="M2 16 7.500 2h1L14 16M4 11.500h8" stroke="#6a6a6a" strokeWidth="1.200" /><path d="m23.500 8-6 7" stroke="#d98124" strokeWidth="2.200" /><path d="m19 13-4 5" stroke="#eee" strokeWidth="3.600" /><path d="m16 18-7 5 3-5 2-2z" fill="#cf5cb4" stroke="#cf5cb4" strokeWidth="1.200" /></Ic></div>
      <div className="flex h-[35px] items-center"><Ic><path d="m3 3 18 2v13L1 16z" fill="#50aee8" stroke="#f4f4f4" strokeWidth="1.400" /><Sky x={3.5} y={5.5} w={19} h={15} /></Ic></div>
      <div className="flex h-[35px] items-center"><Ic><circle cx="12" cy="12" r="10" fill="#3c4c68" stroke="#d8d8d8" strokeWidth="2.200" /><path d="m10.500 20 .5-7-6-4 6.500 1L15 4l-.5 6 5.500 4-5.500-1z" fill="#f3f3f3" /><path d="m5 9 7 3 3-8M12 12l8 2" stroke="#d82c2c" strokeWidth="1.400" /></Ic></div>
      <div className="flex h-[35px] items-center"><Ic><text x="4" y="19" fontFamily="Noto Sans, sans-serif" fontSize="20" fontStyle="italic" fill="#4a4a4a" stroke="#1f1f1f" strokeWidth="1.600" paintOrder="stroke">f</text><text x="11" y="20" fontFamily="Noto Sans, sans-serif" fontSize="11" fill="#4a4a4a" stroke="#1f1f1f" strokeWidth="1.400" paintOrder="stroke" textLength="12">(x)</text></Ic></div>
    </div>
  </div>
);

export default function App() {
  return (
    <div className="flex h-[900px] w-[1600px] flex-col overflow-hidden bg-[#3d3d3d] font-['Ubuntu','Noto_Sans',sans-serif]">
      <TopBar />
      <div className="flex min-h-0 flex-1">
        <Dock />
        <div className="flex w-[1536px] flex-col">
          <div className="flex h-[37px] shrink-0 items-center border-t border-b border-t-[#3d3d3d] border-b-[#1f1f1f] bg-[#2c2c2c] text-white">
            <div className="w-[1436px] pt-px pl-[100px] text-center text-[15px] font-bold">Untitled 1 - LibreOffice Calc</div>
            <div className="flex flex-1 items-center">
              <div className="mt-[5px] ml-[10px] h-px w-2 bg-white" />
              <svg width="9" height="9" viewBox="0 0 9 9" className="ml-[26px]" fill="none"><path d="M2.500.500h6v6" stroke="#999" /><path d="M1 3h4.500v4.500H1z" stroke="#fff" strokeWidth="1.500" /></svg>
              <div className="ml-5 flex h-[18px] w-[18px] items-center justify-center rounded-full bg-[#e04b16]"><svg width="8" height="8" viewBox="0 0 8 8"><path d="m.5.500 7 7M7.500.500l-7 7" stroke="#fff" strokeWidth="1.400" /></svg></div>
            </div>
          </div>
          <div className="flex h-[25px] shrink-0 items-center pt-px pl-2 text-[15px] text-[#f0f0f0]">
            {menus.map(([m, w]) => <div key={m} className={'shrink-0 tracking-[-0.05px] ' + w}>{m}</div>)}
            <svg width="8" height="8" viewBox="0 0 8 8" className="mr-[14px] mb-px ml-auto"><path d="m.5.500 7 7M7.500.500l-7 7" stroke="#eee" strokeWidth="1.300" /></svg>
          </div>
          <div className="mr-9 h-px shrink-0 bg-[#353535]" />
          <div className="flex h-[38px] shrink-0 items-center pb-[2px] pl-[3px]">
            <Grip /><div className="-ml-[2px]" />
            <Drop><NewDoc /></Drop><Drop><Folder /></Drop><Drop><Save /></Drop><Sep />
            <Btn><Pdf /></Btn><Btn><Printer /></Btn><Btn><Preview /></Btn><Sep />
            <Btn><Cut /></Btn><Btn><Copy /></Btn><Drop><Paste /></Drop><Sep />
            <Btn><Brush /></Btn><Btn><Clear /></Btn><Sep />
            <Drop><Undo /></Drop><Drop dim><Redo /></Drop><Sep />
            <Btn><Find /></Btn><Btn><Spell /></Btn><Sep />
            <Drop><Rows /></Drop><Drop><Cols /></Drop><Sep />
            <Btn><Sort kind="both" /></Btn><Btn><Sort kind="az" /></Btn><Btn><Sort kind="za" /></Btn><Btn><Filter /></Btn><Sep />
            <Btn><Image /></Btn><Btn><Chart /></Btn><Btn><Pivot /></Btn><Sep />
            <Drop><Glyph t="Ω" size={24} font="Liberation Serif, serif" w={19} y={20} /></Drop><Btn><Link /></Btn><Btn><Comment /></Btn><Btn><Headers /></Btn><Sep />
            <Btn><PrintArea /></Btn><Drop><Freeze /></Drop><Btn><Split /></Btn><Sep /><Btn><Shapes /></Btn>
          </div>
          <div className="flex h-[39px] shrink-0 items-center pl-[3px]">
            <Grip />
            <div className="-ml-[3px] flex w-[238px] gap-2"><Combo text="Liberation Sa" box="w-[144px]" h="h-[34px]" track="tracking-[0.2px]" /><Combo text="10" box="w-[85px]" h="h-[34px]" /></div>
            <Sep />
            <Btn><Glyph t="B" font="DejaVu Serif, serif" size={20} w={14} /></Btn><Btn><Glyph t="I" font="DejaVu Serif, serif" italic size={20} /></Btn>
            <Btn><Ic><path d="M6.500 2v9.500a5.500 5.500 0 0 0 11 0V2" stroke="#232323" strokeWidth="3.600" /><path d="M6.500 2v9.500a5.500 5.500 0 0 0 11 0V2" stroke="#636363" strokeWidth="1.500" /><path d="M2 21.500h20" stroke="#999" /></Ic></Btn><Sep />
            <Drop><FontColor /></Drop><Drop><Fill /></Drop><Sep />
            <Btn><AlignI k="l" /></Btn><Btn><AlignI k="c" /></Btn><Btn><AlignI k="r" /></Btn><Sep />
            <Btn><Wrap /></Btn><Btn><Merge /></Btn><Sep />
            <Btn><VAlign y={4.5} /></Btn><Btn><VAlign y={8.5} /></Btn><Btn><VAlign y={13.5} /></Btn><Sep />
            <Drop><Money /></Drop><Btn><Glyph t="%" size={19} font="Liberation Sans, sans-serif" w={17} /></Btn><Btn><Glyph t="7.4" size={19} font="Open Sans, sans-serif" w={22} /></Btn><Btn><Cal /></Btn><Sep />
            <Btn><Dec add /></Btn><Btn><Dec /></Btn><Sep />
            <Btn><Indent /></Btn><Btn><Indent left /></Btn><Sep />
            <Drop><Borders /></Drop><Drop><Pen /></Drop><Drop><BgStyle /></Drop><Sep />
            <Drop><Cond /></Drop>
          </div>
          <div className="flex h-[712px] shrink-0">
            <div className="flex w-[1489px] flex-col">
              <div className="flex h-[34px] shrink-0 items-center">
                <Combo text="N12" box="w-[157px]" h="h-[34px]" track="tracking-[0.2px]" />
                <Sep />
                <div className="flex w-[94px] items-center pl-[2px]">
                  <Ic><text x="4" y="17" fontFamily="DejaVu Serif, serif" fontSize="18" fill="#636363" stroke="#202020" strokeWidth="1.500" paintOrder="stroke">f</text><text x="11.500" y="18.500" fontFamily="DejaVu Serif, serif" fontSize="12" fill="#636363" stroke="#202020" strokeWidth="1.400" paintOrder="stroke">x</text></Ic>
                  <div className="-ml-[2px]" />
                  <Glyph t="Σ" size={19} y={18} />
                  <Caret className="mt-[3px] ml-[3px] text-black" />
                  <svg width="10" height="8" viewBox="0 0 10 8" className="ml-[11px]"><path d="M0 1.500h10M0 6.500h10" stroke="#888" strokeWidth="1.500" /></svg>
                </div>
                <div className="h-6 w-[1203px] border border-[#868686] bg-[#323232]" />
                <svg width="11" height="6" viewBox="0 0 11 6" className="ml-1"><path d="M0 0h11L5.500 6z" fill="#fff" /></svg>
              </div>
              <div className="mr-px flex h-[41px] shrink-0 items-center border-t border-b border-t-[#868686] border-b-[#004586] bg-[#bce5f7] text-[15px] text-[#111]">
                <svg width="30" height="30" viewBox="0 0 30 30" className="ml-[5px]"><circle cx="15" cy="15" r="14.400" fill="#459af3" stroke="#3278cf" /><path d="M2 13a13 13 0 0 1 26 0q-13 5-26 0z" fill="#5aabf8" /><text x="15" y="24" textAnchor="middle" fontFamily="Liberation Serif, serif" fontWeight="bold" fontStyle="italic" fontSize="28" fill="#fff">i</text></svg>
                <span className="ml-[7px]">Help us make LibreOffice even better!</span>
                <div className="mr-[15px] ml-auto flex h-[30px] w-[108px] items-center justify-center rounded border border-[#1e1e1e] bg-[#464646] text-[#eee]">Get involved</div>
                <svg width="10" height="10" viewBox="0 0 10 10" className="mr-[14px]"><path d="m.8.800 8.400 8.400M9.200.800.800 9.200" stroke="#004586" strokeWidth="2" /></svg>
              </div>
              <Sheet />
              <div className="flex h-3 shrink-0 items-center justify-between bg-[#383838] pr-3">
                <div className="ml-1 h-[6px] w-[688px] rounded-full bg-[#ababab]" />
                <div className="flex h-3 w-[5px] items-center justify-center bg-[#8a8a8a]"><div className="h-[6px] w-px bg-black" /></div>
              </div>
              <Tabs />
            </div>
            <Side />
          </div>
          <Status />
        </div>
      </div>
    </div>
  );
}
